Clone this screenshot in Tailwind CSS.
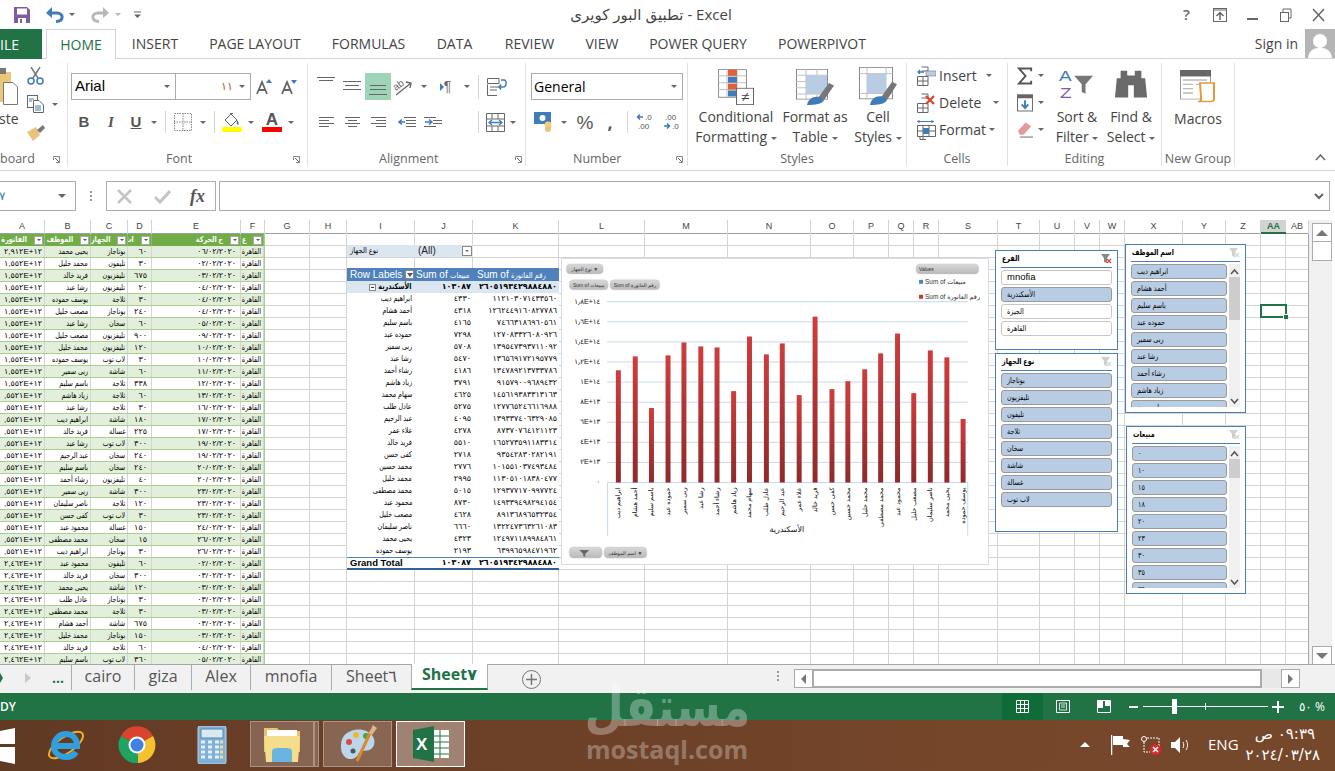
<!DOCTYPE html>
<html lang="ar">

<head>
    <meta charset="UTF-8">
    <title>Excel</title>
    <script src="https://cdn.jsdelivr.net/npm/@tailwindcss/browser@4"></script>
</head>

<body class="bg-white">
<div class="relative w-[1335px] h-[771px] overflow-hidden flex flex-col bg-white font-['Open_Sans','DejaVu_Sans',sans-serif] text-[#444]">

    <!-- Title bar -->
    <div class="h-[29px] shrink-0 flex items-center relative">
        <svg class="ml-[14px] w-[16px] h-[16px]" viewBox="0 0 16 16"><path d="M0 0H13L16 3V16H0Z" fill="#7e5ca3"/><rect x="3" y="1.5" width="10" height="6" fill="#fff"/><rect x="4" y="11" width="8" height="5" fill="#fff"/><rect x="6" y="12" width="2" height="4" fill="#7e5ca3"/></svg>
        <svg class="ml-[16px] w-[18px] h-[16px]" viewBox="0 0 18 16"><path d="M3 6H11C18 6 18 14 10 14.5" fill="none" stroke="#3f7cb9" stroke-width="3"/><path d="M0 6L6 0V11Z" fill="#3f7cb9"/></svg>
        <span class="ml-[5px] border-x-[3px] border-t-[3px] border-x-transparent border-t-[#666]"></span>
        <svg class="ml-[16px] w-[18px] h-[16px]" viewBox="0 0 18 16"><path d="M15 6H7C0 6 0 14 8 14.5" fill="none" stroke="#b8b8b8" stroke-width="3"/><path d="M18 6L12 0V11Z" fill="#b8b8b8"/></svg>
        <span class="ml-[6px] border-x-[3px] border-t-[3px] border-x-transparent border-t-[#b8b8b8]"></span>
        <svg class="ml-[13px] w-[7px] h-[7px]" viewBox="0 0 7 7"><path d="M0 1H7" stroke="#666"/><path d="M0 3.5H7L3.5 7Z" fill="#666"/></svg>
        <div class="ml-[425px] text-[15px] text-[#444] w-[170px] text-center whitespace-nowrap" dir="ltr">تطبيق البور كويرى - Excel</div>
        <div class="ml-auto flex items-center mr-[0px]">
            <span class="w-[33px] text-center text-[15px] font-semibold text-[#666]">?</span>
            <svg class="w-[33px] h-[14px]" viewBox="0 0 33 14"><rect x="10.5" y="0.5" width="13" height="13" fill="none" stroke="#666"/><path d="M11 2H23" stroke="#666"/><path d="M17 12V5M13.5 8L17 4.500L20.500 8" fill="none" stroke="#666" stroke-width="1.500"/></svg>
            <svg class="w-[33px] h-[14px]" viewBox="0 0 33 14"><path d="M11 11H22" stroke="#666" stroke-width="2"/></svg>
            <svg class="w-[33px] h-[14px]" viewBox="0 0 33 14"><rect x="11.500" y="4.500" width="8" height="9" fill="#fff" stroke="#666"/><path d="M14 4V1H22V10H20" fill="none" stroke="#666"/></svg>
            <svg class="w-[33px] h-[14px]" viewBox="0 0 33 14"><path d="M11 1L22 13M22 1L11 13" stroke="#666" stroke-width="1.500"/></svg>
        </div>
    </div>

    <!-- Ribbon tabs -->
    <div class="h-[30px] shrink-0 flex items-stretch border-b border-[#d4d4d4] text-[14px]">
        <div class="w-[42px] bg-[#217346] text-white flex items-center justify-end pr-[23px] -mb-px">ILE</div>
        <div class="ml-[4px] w-[70px] border-x border-t border-[#d4d4d4] bg-white -mb-px text-[#217346] flex items-center justify-center">HOME</div>
        <div class="flex items-center gap-[29px] ml-[15px] whitespace-nowrap">
            <span class="w-[48px] text-center">INSERT</span>
            <span class="w-[94px] text-center">PAGE LAYOUT</span>
            <span class="w-[75px] text-center">FORMULAS</span>
            <span class="w-[39px] text-center">DATA</span>
            <span class="w-[53px] text-center">REVIEW</span>
            <span class="w-[34px] text-center">VIEW</span>
            <span class="w-[100px] text-center">POWER QUERY</span>
            <span class="w-[90px] text-center">POWERPIVOT</span>
        </div>
        <div class="ml-auto flex items-center">
            <span>Sign in</span>
            <div class="ml-[7px] w-[30px] h-[29px] bg-[#b5b5b5] overflow-hidden flex justify-center">
                <svg class="w-[30px] h-[29px]" viewBox="0 0 30 29"><circle cx="15" cy="12" r="7" fill="#fff"/><path d="M3 29C4 20 10 19 15 19S26 20 27 29Z" fill="#fff"/></svg>
            </div>
        </div>
    </div>

    <!-- Ribbon -->
    <div class="h-[112px] shrink-0 flex items-start border-b border-[#d4d4d4] pt-[4px] text-[14px] relative">

        <!-- Clipboard -->
        <div class="w-[68px] h-[103px] shrink-0 border-r border-[#e1e1e1] flex flex-col">
            <div class="h-[89px] flex">
                <div class="w-[22px] shrink-0 pt-[5px] overflow-hidden">
                    <svg class="w-[22px] h-[38px]" viewBox="0 0 22 38"><rect x="-8" y="4" width="19" height="30" fill="#eac77b"/><rect x="-3" y="0" width="9" height="6" fill="#777"/><path d="M3.500 14.500H13L17.500 19V36.500H3.500Z" fill="#fff" stroke="#777"/></svg>
                    <div class="mt-[2px] -ml-[1px] text-[14px] whitespace-nowrap">ste</div>
                </div>
                <div class="ml-[5px] flex flex-col pt-[4px]">
                    <svg class="w-[17px] h-[18px]" viewBox="0 0 17 18"><path d="M4 0L11 11M13 0L6 11" stroke="#777" stroke-width="1.500"/><circle cx="4" cy="14" r="3" fill="none" stroke="#3f7cb9" stroke-width="1.500"/><circle cx="13" cy="14" r="3" fill="none" stroke="#3f7cb9" stroke-width="1.500"/></svg>
                    <div class="mt-[10px] flex items-center">
                        <svg class="w-[17px] h-[18px]" viewBox="0 0 17 18"><rect x="0.500" y="0.500" width="10" height="12" fill="#fff" stroke="#666"/><path d="M6.500 5.500H12L16.500 10V17.500H6.500Z" fill="#fff" stroke="#666"/><path d="M8 11H14M8 13H14M8 15H14M2 4H7M2 6H5" stroke="#3f7cb9"/></svg>
                        <span class="ml-[8px] border-x-[3px] border-t-[3px] border-x-transparent border-t-[#666]"></span>
                    </div>
                    <svg class="mt-[12px] w-[18px] h-[16px]" viewBox="0 0 18 16"><path d="M0 7L9 2L13 10L6 16Z" fill="#e9c27d"/><path d="M10 5L16 0L18 3L13 8Z" fill="#777"/></svg>
                </div>
            </div>
            <div class="flex items-center text-[12.500px] text-[#666] h-[14px]">
                <span class="whitespace-nowrap w-[53px]">board</span>
                <svg class="w-[7px] h-[7px]" viewBox="0 0 7 7"><path d="M0.500 4V0.500H6.500V6.500H3" fill="none" stroke="#888"/><path d="M2 2L6 6" stroke="#666"/></svg>
            </div>
        </div>

        <!-- Font -->
        <div class="w-[240px] h-[103px] shrink-0 border-r border-[#e1e1e1] flex flex-col">
            <div class="h-[89px] pt-[10px]">
                <div class="flex items-center h-[27px]">
                    <div class="ml-[3px] w-[180px] h-[27px] border border-[#ababab] flex items-center">
                        <div class="w-[104px] h-full border-r border-[#ababab] flex items-center justify-between pl-[3px] pr-[5px] text-[15px] text-black font-['Liberation_Sans']">Arial<span class="border-x-[3px] border-t-[3px] border-x-transparent border-t-[#666]"></span></div>
                        <div class="flex-1 h-full flex items-center justify-end pr-[5px] gap-[6px]"><span class="font-['Liberation_Sans'] text-[11px] text-[#b5581a]">١١</span><span class="border-x-[3px] border-t-[3px] border-x-transparent border-t-[#666]"></span></div>
                    </div>
                    <svg class="ml-[5px] w-[18px] h-[16px]" viewBox="0 0 18 16"><path d="M1 15L6 3L11 15M3 11H9" fill="none" stroke="#666" stroke-width="1.800"/><path d="M10 4L13 0L16 4Z" fill="#3f7cb9"/></svg>
                    <svg class="ml-[7px] w-[18px] h-[16px]" viewBox="0 0 18 16"><path d="M1 15L6 3L11 15M3 11H9" fill="none" stroke="#666" stroke-width="1.800"/><path d="M10 1L13 5L16 1Z" fill="#3f7cb9"/></svg>
                </div>
                <div class="flex items-center h-[24px] mt-[10px] font-['Liberation_Sans'] text-[#555]">
                    <span class="ml-[9px] w-[14px] text-center text-[15px] font-bold">B</span>
                    <span class="ml-[13px] w-[14px] text-center text-[15px] font-bold italic font-['Liberation_Serif']">I</span>
                    <span class="ml-[11px] w-[14px] text-center text-[15px] font-bold underline">U</span>
                    <span class="ml-[8px] border-x-[3px] border-t-[3px] border-x-transparent border-t-[#666]"></span>
                    <span class="ml-[8px] w-px h-[22px] bg-[#d4d4d4]"></span>
                    <svg class="ml-[8px] w-[18px] h-[18px]" viewBox="0 0 18 18"><path d="M0.500 0.500H17.500V17.500H0.500ZM9 0V18M0 9H18" fill="none" stroke="#888" stroke-dasharray="1.500 1"/></svg>
                    <span class="ml-[8px] border-x-[3px] border-t-[3px] border-x-transparent border-t-[#666]"></span>
                    <span class="ml-[8px] w-px h-[22px] bg-[#d4d4d4]"></span>
                    <div class="ml-[7px] w-[20px] flex flex-col items-center">
                        <svg class="w-[16px] h-[14px]" viewBox="0 0 16 14"><path d="M1 7L7 1L13 7L7 13Z" fill="#fff" stroke="#666"/><path d="M6 0.500H9" stroke="#666"/><path d="M13 7C15 9 15 12 14 12S12 9 13 7Z" fill="#3f7cb9"/></svg>
                        <span class="w-[20px] h-[5px] bg-[#ffff00]"></span>
                    </div>
                    <span class="ml-[6px] border-x-[3px] border-t-[3px] border-x-transparent border-t-[#666]"></span>
                    <div class="ml-[8px] w-[20px] flex flex-col items-center leading-none">
                        <span class="text-[17px] h-[14px] leading-[14px] font-bold text-[#555]">A</span>
                        <span class="w-[20px] h-[5px] bg-[#ff0000]"></span>
                    </div>
                    <span class="ml-[6px] border-x-[3px] border-t-[3px] border-x-transparent border-t-[#666]"></span>
                </div>
            </div>
            <div class="flex items-center text-[12.500px] text-[#666] h-[14px]">
                <span class="ml-[98px] w-[127px] text-left">Font</span>
                <svg class="w-[7px] h-[7px]" viewBox="0 0 7 7"><path d="M0.500 4V0.500H6.500V6.500H3" fill="none" stroke="#888"/><path d="M2 2L6 6" stroke="#666"/></svg>
            </div>
        </div>

        <!-- Alignment -->
        <div class="w-[218px] h-[103px] shrink-0 border-r border-[#e1e1e1] flex flex-col">
            <div class="h-[89px] pt-[10px]">
                <div class="flex items-stretch h-[27px]">
                    <div class="ml-[5px] w-[26px] flex items-center justify-center"><svg class="w-[18px] h-[27px]" viewBox="0 0 18 27"><path d="M0 4.500H18M2 7.500H16" stroke="#666"/></svg></div>
                    <div class="w-[26px] flex items-center justify-center"><svg class="w-[18px] h-[27px]" viewBox="0 0 18 27"><path d="M0 8.500H18M2 12.500H16M0 16.500H18" stroke="#666"/></svg></div>
                    <div class="w-[26px] bg-[#9fd5b7] flex items-center justify-center"><svg class="w-[18px] h-[27px]" viewBox="0 0 18 27"><path d="M1 12.500H17M1 16.500H17M0 21.500H18" stroke="#666"/></svg></div>
                    <div class="w-[24px] flex items-center justify-center"><svg class="w-[20px] h-[20px]" viewBox="0 0 20 20"><path d="M3 18L18 6M13 5L18 6L17 11" fill="none" stroke="#666" stroke-width="1.300"/><text x="0" y="11" transform="rotate(-35 6 8)" font-size="10" fill="#666" font-family="Liberation Sans">ab</text></svg></div>
                    <span class="w-[18px] flex items-center justify-center"><span class="border-x-[3px] border-t-[3px] border-x-transparent border-t-[#666]"></span></span>
                    <div class="w-[25px] flex items-center justify-center text-[#666] text-[14px] font-['Liberation_Sans']"><span class="border-y-[4px] border-l-[4px] border-y-transparent border-l-[#3f7cb9]"></span>¶</div>
                    <span class="w-[18px] flex items-center justify-center"><span class="border-x-[3px] border-t-[3px] border-x-transparent border-t-[#666]"></span></span>
                    <span class="ml-[2px] w-px h-[24px] self-center bg-[#d4d4d4]"></span>
                    <div class="w-[36px] flex items-center justify-center"><svg class="w-[20px] h-[18px]" viewBox="0 0 20 18"><path d="M0.500 0.500H12V5.500H0.500ZM0.500 6.500V17.500H10M3 9H12M3 12H10" fill="none" stroke="#666"/><path d="M14 2H17C20 2 20 9 16 9H12M14 6.500L12 9L14 11.500" fill="none" stroke="#3f7cb9" stroke-width="1.500"/></svg></div>
                </div>
                <div class="flex items-center h-[24px] mt-[10px]">
                    <div class="ml-[5px] w-[26px] flex justify-center"><svg class="w-[15px] h-[11px]" viewBox="0 0 15 11"><path d="M0 .5H15M0 3.500H10M0 6.500H15M0 9.500H10" stroke="#666"/></svg></div>
                    <div class="w-[26px] flex justify-center"><svg class="w-[15px] h-[11px]" viewBox="0 0 15 11"><path d="M0 .5H15M3 3.500H12M0 6.500H15M3 9.500H12" stroke="#666"/></svg></div>
                    <div class="w-[26px] flex justify-center"><svg class="w-[15px] h-[11px]" viewBox="0 0 15 11"><path d="M0 .5H15M5 3.500H15M0 6.500H15M5 9.500H15" stroke="#666"/></svg></div>
                    <div class="ml-[3px] w-[26px] flex justify-center"><svg class="w-[18px] h-[11px]" viewBox="0 0 18 11"><path d="M6 .5H18M8 9.500H18M8 3.500H18M8 6.500H18" stroke="#666"/><path d="M1 5H7M4 2.500L1 5L4 7.500" fill="none" stroke="#3f7cb9" stroke-width="1.500"/></svg></div>
                    <div class="w-[26px] flex justify-center"><svg class="w-[18px] h-[11px]" viewBox="0 0 18 11"><path d="M0 .5H12M0 9.500H12M9 3.500H18M9 6.500H18" stroke="#666"/><path d="M1 5H8M5 2.500L8 5L5 7.500" fill="none" stroke="#3f7cb9" stroke-width="1.500"/></svg></div>
                    <span class="ml-[32px] w-px h-[22px] bg-[#d4d4d4]"></span>
                    <div class="ml-[7px] w-[19px]"><svg class="w-[19px] h-[19px]" viewBox="0 0 19 19"><path d="M.5.500H18.500V18.500H.5ZM0 6H19M0 13H19M6 0V6M12 0V6M6 13V19M12 13V19" fill="none" stroke="#666"/><path d="M3 9.500H16M6 7L3 9.500L6 12M13 7L16 9.500L13 12" fill="none" stroke="#3f7cb9" stroke-width="1.300"/></svg></div>
                    <span class="ml-[5px] border-x-[3px] border-t-[3px] border-x-transparent border-t-[#666]"></span>
                </div>
            </div>
            <div class="flex items-center text-[12.500px] text-[#666] h-[14px]">
                <span class="ml-[71px] w-[136px]">Alignment</span>
                <svg class="w-[7px] h-[7px]" viewBox="0 0 7 7"><path d="M0.500 4V0.500H6.500V6.500H3" fill="none" stroke="#888"/><path d="M2 2L6 6" stroke="#666"/></svg>
            </div>
        </div>

        <!-- Number -->
        <div class="w-[162px] h-[103px] shrink-0 border-r border-[#e1e1e1] flex flex-col">
            <div class="h-[89px] pt-[10px]">
                <div class="ml-[5px] w-[152px] h-[27px] border border-[#ababab] flex items-center justify-between pl-[2px] pr-[5px] text-black">General<span class="border-x-[3px] border-t-[3px] border-x-transparent border-t-[#666]"></span></div>
                <div class="flex items-center h-[24px] mt-[10px]">
                    <svg class="ml-[8px] w-[20px] h-[20px]" viewBox="0 0 20 20"><rect x="0" y="0" width="17" height="12" fill="#3f7cb9"/><circle cx="8.500" cy="6" r="3" fill="#fff"/><circle cx="14" cy="13" r="3.500" fill="#f1d27a"/><circle cx="14" cy="17" r="3" fill="#e9c27d"/></svg>
                    <span class="ml-[7px] border-x-[3px] border-t-[3px] border-x-transparent border-t-[#666]"></span>
                    <span class="ml-[8px] w-[20px] text-center text-[#555] text-[19px] leading-none font-['Liberation_Sans']">%</span>
                    <span class="ml-[8px] w-[14px] text-center text-[#555] text-[18px] font-bold leading-none">,</span>
                    <span class="ml-[10px] w-px h-[22px] bg-[#d4d4d4]"></span>
                    <svg class="ml-[8px] w-[18px] h-[18px]" viewBox="0 0 18 18"><path d="M2 4H7M4 1.500L1.500 4L4 6.500" fill="none" stroke="#3f7cb9" stroke-width="1.500"/><text x="9" y="7" font-size="8" font-family="Liberation Sans" fill="#555">.0</text><text x="2" y="16" font-size="8" font-family="Liberation Sans" fill="#555">.00</text></svg>
                    <svg class="ml-[9px] w-[18px] h-[18px]" viewBox="0 0 18 18"><text x="2" y="7" font-size="8" font-family="Liberation Sans" fill="#555">.00</text><path d="M1 13H6M4 10.500L6.500 13L4 15.500" fill="none" stroke="#3f7cb9" stroke-width="1.500"/><text x="9" y="16" font-size="8" font-family="Liberation Sans" fill="#555">.0</text></svg>
                </div>
            </div>
            <div class="flex items-center text-[12.500px] text-[#666] h-[14px]">
                <span class="ml-[47px] w-[103px]">Number</span>
                <svg class="w-[7px] h-[7px]" viewBox="0 0 7 7"><path d="M0.500 4V0.500H6.500V6.500H3" fill="none" stroke="#888"/><path d="M2 2L6 6" stroke="#666"/></svg>
            </div>
        </div>

        <!-- Styles -->
        <div class="w-[219px] h-[103px] shrink-0 border-r border-[#e1e1e1] flex flex-col">
            <div class="h-[89px] flex pt-[6px] leading-[20px] text-center whitespace-nowrap">
                <div class="ml-[6px] w-[84px] flex flex-col items-center">
                    <svg class="w-[36px] h-[36px]" viewBox="0 0 36 42" preserveAspectRatio="none"><path d="M.5 .5H28.500V33H.5Z" fill="#fff" stroke="#888"/><path d="M0 8H28M0 16H28M0 24H28M9 0V33M19 0V33" stroke="#bbb"/><rect x="10" y="1" width="9" height="7" fill="#e0603a"/><rect x="10" y="9" width="9" height="7" fill="#3f7cb9"/><rect x="10" y="17" width="9" height="7" fill="#e0603a"/><rect x="10" y="25" width="9" height="7" fill="#3f7cb9"/><rect x="18.500" y="22.500" width="17" height="19" fill="#fff" stroke="#666"/><text x="23" y="37" font-size="15" fill="#444" font-family="Liberation Sans">≠</text></svg>
                    <span class="mt-[2px]">Conditional</span>
                    <span>Formatting <span class="inline-block align-middle border-x-[3px] border-t-[3px] border-x-transparent border-t-[#666]"></span></span>
                </div>
                <div class="ml-[3px] w-[68px] flex flex-col items-center">
                    <svg class="w-[38px] h-[36px]" viewBox="0 0 38 46" preserveAspectRatio="none"><rect x=".5" y=".5" width="31" height="38" fill="#fff" stroke="#888"/><path d="M0 8H32M0 16H32M0 24H32M0 32H32M10 0V39M21 0V39" stroke="#bbb"/><rect x="10" y="8" width="21" height="24" fill="#b8cce4"/><path d="M22 37L33 18L38 21L28 40Z" fill="#777"/><path d="M11 46C12 38 18 34 24 36L28 40C26 45 19 46 11 46Z" fill="#3f7cb9"/></svg>
                    <span class="mt-[2px]">Format as</span>
                    <span>Table <span class="inline-block align-middle border-x-[3px] border-t-[3px] border-x-transparent border-t-[#666]"></span></span>
                </div>
                <div class="ml-[1px] w-[56px] flex flex-col items-center">
                    <svg class="w-[38px] h-[38px] -mt-[2px]" viewBox="0 0 38 46" preserveAspectRatio="none"><rect x=".5" y=".5" width="33" height="38" fill="#fff" stroke="#888"/><path d="M0 8H34M0 32H34M8 0V39M27 0V39" stroke="#bbb"/><rect x="8" y="8" width="19" height="24" fill="#b8cce4"/><path d="M22 37L33 18L38 21L28 40Z" fill="#777"/><path d="M11 46C12 38 18 34 24 36L28 40C26 45 19 46 11 46Z" fill="#3f7cb9"/></svg>
                    <span class="mt-[2px]">Cell</span>
                    <span>Styles <span class="inline-block align-middle border-x-[3px] border-t-[3px] border-x-transparent border-t-[#666]"></span></span>
                </div>
            </div>
            <div class="h-[14px] text-[12.500px] text-[#666] flex items-center justify-center">Styles</div>
        </div>

        <!-- Cells -->
        <div class="w-[101px] h-[103px] shrink-0 border-r border-[#e1e1e1] flex flex-col">
            <div class="h-[89px] pt-[2px] pl-[10px] flex flex-col gap-[6px]">
                <div class="flex items-center h-[21px]">
                    <svg class="w-[19px] h-[20px]" viewBox="0 0 19 20"><path d="M.5 10.500H11V19.500H.5ZM6 10V20M0 15H11M4.500 1H11V5H4.500" fill="none" stroke="#666"/><path d="M1 6H7M3 4L1 6L3 8" fill="none" stroke="#3f7cb9" stroke-width="1.300"/><rect x="9" y="5" width="10" height="5" fill="#b8cce4" stroke="#666" stroke-width=".5"/></svg>
                    <span class="ml-[3px] w-[47px]">Insert</span>
                    <span class="border-x-[3px] border-t-[3px] border-x-transparent border-t-[#666]"></span>
                </div>
                <div class="flex items-center h-[21px]">
                    <svg class="w-[19px] h-[20px]" viewBox="0 0 19 20"><path d="M.5 10.500H11V19.500H.5ZM6 10V20M0 15H11M4.500 1H11V5H4.500" fill="none" stroke="#666"/><path d="M9 3L17 11M17 3L9 11" stroke="#d9432f" stroke-width="2.200"/></svg>
                    <span class="ml-[3px] w-[54px]">Delete</span>
                    <span class="border-x-[3px] border-t-[3px] border-x-transparent border-t-[#666]"></span>
                </div>
                <div class="flex items-center h-[21px]">
                    <svg class="w-[19px] h-[20px]" viewBox="0 0 19 20"><path d="M.5 5.500H18.500V16.500H.5ZM6 5V20M12 5V17M0 11H18M3 16.500V19.500H9" fill="none" stroke="#666"/><rect x="6" y="8" width="6" height="6" fill="#3f7cb9"/><path d="M0 1.500H17M2 0V3M15 0V3" stroke="#3f7cb9"/></svg>
                    <span class="ml-[3px] w-[50px]">Format</span>
                    <span class="border-x-[3px] border-t-[3px] border-x-transparent border-t-[#666]"></span>
                </div>
            </div>
            <div class="h-[14px] text-[12.500px] text-[#666] flex items-center justify-center">Cells</div>
        </div>

        <!-- Editing -->
        <div class="w-[154px] h-[103px] shrink-0 border-r border-[#e1e1e1] flex flex-col">
            <div class="h-[89px] flex">
                <div class="ml-[9px] w-[27px] flex flex-col pt-[2px] gap-[6px]">
                    <div class="flex items-center h-[21px]"><svg class="w-[18px] h-[18px]" viewBox="0 0 18 18"><path d="M15 4V1H2L9 9L2 17H15V14" fill="none" stroke="#555" stroke-width="2"/></svg><span class="ml-[4px] border-x-[3px] border-t-[3px] border-x-transparent border-t-[#666]"></span></div>
                    <div class="flex items-center h-[21px]"><svg class="w-[17px] h-[18px]" viewBox="0 0 17 18"><rect x=".5" y=".5" width="16" height="17" fill="#fff" stroke="#666"/><rect x="0" y="0" width="17" height="4" fill="#666"/><path d="M8.500 6V14M5 10.500L8.500 14.500L12 10.500" fill="none" stroke="#3f7cb9" stroke-width="2"/></svg><span class="ml-[5px] border-x-[3px] border-t-[3px] border-x-transparent border-t-[#666]"></span></div>
                    <div class="flex items-center h-[21px]"><svg class="w-[17px] h-[18px]" viewBox="0 0 17 18"><path d="M1 10L9 1L15 5L7 14H3Z" fill="#e39a9a"/><path d="M3 16.500H17" stroke="#666"/></svg><span class="ml-[5px] border-x-[3px] border-t-[3px] border-x-transparent border-t-[#666]"></span></div>
                </div>
                <div class="ml-[7px] w-[52px] flex flex-col items-center pt-[5px] leading-[20px] whitespace-nowrap">
                    <svg class="w-[36px] h-[35px]" viewBox="0 0 38 45" preserveAspectRatio="none"><text x="0" y="17" font-size="20" fill="#3f7cb9" font-family="Liberation Sans">A</text><text x="1" y="38" font-size="20" fill="#7e5ca3" font-family="Liberation Sans">Z</text><path d="M16 10H36L28 21V33L24 31V21Z" fill="#777"/></svg>
                    <span class="mt-[4px]">Sort &amp;</span>
                    <span>Filter <span class="inline-block align-middle border-x-[3px] border-t-[3px] border-x-transparent border-t-[#666]"></span></span>
                </div>
                <div class="ml-[2px] w-[52px] flex flex-col items-center pt-[7px] leading-[20px] whitespace-nowrap">
                    <svg class="w-[34px] h-[31px]" viewBox="0 0 36 45" preserveAspectRatio="none"><path d="M7 1H14V8H22V1H29V12H33L35 40H21V22H15V40H1L3 12H7Z" fill="#696969"/></svg>
                    <span class="mt-[6px]">Find &amp;</span>
                    <span>Select <span class="inline-block align-middle border-x-[3px] border-t-[3px] border-x-transparent border-t-[#666]"></span></span>
                </div>
            </div>
            <div class="h-[14px] text-[12.500px] text-[#666] flex items-center justify-center">Editing</div>
        </div>

        <!-- New Group -->
        <div class="w-[73px] h-[103px] shrink-0 border-r border-[#e1e1e1] flex flex-col">
            <div class="h-[89px] flex flex-col items-center pt-[7px] whitespace-nowrap">
                <svg class="w-[36px] h-[33px]" viewBox="0 0 36 46" preserveAspectRatio="none"><rect x=".5" y=".5" width="30" height="40" fill="#fff" stroke="#999"/><rect x="0" y="0" width="31" height="9" fill="#666"/><path d="M3 14H27M3 20H13M16 20H24M3 26H13M3 32H13" stroke="#bbb" stroke-width="2"/><path d="M20 18H34V41C34 44 30 44 28 44H18C22 44 21 41 21 38Z" fill="#fff" stroke="#e39a3c" stroke-width="2"/></svg>
                <span class="mt-[5px]">Macros</span>
            </div>
            <div class="h-[14px] text-[12.500px] text-[#666] flex items-center justify-center whitespace-nowrap">New Group</div>
        </div>

        <svg class="absolute left-[1315px] top-[95px] w-[11px] h-[7px]" viewBox="0 0 11 7"><path d="M1 6L5.500 1L10 6" fill="none" stroke="#666" stroke-width="1.500"/></svg>
    </div>

    <!-- Formula bar -->
    <div class="h-[49px] shrink-0 pt-[10px] pb-[9px] flex items-stretch text-[#777]">
        <div class="w-[76px] border-y border-r border-[#ababab] flex items-center justify-between pr-[9px]">
            <span class="text-[12px] text-[#3f7cb9] font-['Liberation_Sans'] -ml-[1px]">٧</span>
            <span class="border-x-[4px] border-t-[4px] border-x-transparent border-t-[#666]"></span>
        </div>
        <div class="w-[30px] flex items-center justify-center"><span class="w-[2px] h-[10px] border-l-2 border-dotted border-[#999]"></span></div>
        <div class="w-[110px] border border-[#ababab] flex items-center pl-[10px]">
            <svg class="w-[15px] h-[15px]" viewBox="0 0 15 15"><path d="M1 1L14 14M14 1L1 14" stroke="#c4c4c4" stroke-width="2.500"/></svg>
            <svg class="ml-[22px] w-[17px] h-[15px]" viewBox="0 0 17 15"><path d="M1 8L6 13L16 2" fill="none" stroke="#c4c4c4" stroke-width="3"/></svg>
            <span class="ml-[19px] font-['Liberation_Serif'] italic font-bold text-[18px] text-[#555] leading-none">fx</span>
        </div>
        <div class="ml-[3px] w-[1111px] border border-[#ababab] flex items-center justify-end pr-[5px]">
            <svg class="w-[10px] h-[7px]" viewBox="0 0 10 7"><path d="M1 1L5 5L9 1" fill="none" stroke="#666" stroke-width="2"/></svg>
        </div>
    </div>

    <!-- Sheet -->
    <div class="h-[444px] shrink-0 flex font-['Liberation_Sans','DejaVu_Sans',sans-serif] text-black">
        <div class="w-[1309px] shrink-0 flex flex-col border-r border-[#a6a6a6] -mr-px relative z-10">
            <div id="col-heads" class="h-[14px] shrink-0 grid grid-cols-[45px_46px_37px_24px_89px_24px_45px_37px_68px_58px_86px_86px_83px_83px_43px_35px_25px_25px_59px_42px_35px_25px_25px_58px_43px_35px_25px_23px] border-b border-[#9f9f9f] text-[9px] text-[#444] text-center leading-[13px]"></div>
            <div class="relative flex-1 overflow-hidden">
                <!-- grid lines -->
                <div id="grid-lines" class="absolute inset-0 grid grid-cols-[45px_46px_37px_24px_89px_24px_45px_37px_68px_58px_86px_86px_83px_83px_43px_35px_25px_25px_59px_42px_35px_25px_25px_58px_43px_35px_25px_23px] bg-[repeating-linear-gradient(to_bottom,transparent_0,transparent_11px,#d4d4d4_11px,#d4d4d4_12px)]"></div>

                <div class="relative flex items-start">
                    <!-- data table -->
                    <div id="data-table" class="w-[265px] shrink-0 text-[8px] border-r border-[#a9d08e]"></div>

                    <!-- pivot table -->
                    <div class="ml-[82px] w-[212px] shrink-0 pt-[11px] text-[8px]">
                        <div class="h-[12px] w-[126px] bg-[#dce6f1] flex items-center">
                            <span class="w-[71px] pl-[3px] text-[8px]"><span class="inline-block origin-left scale-x-[.85]">نوع الجهاز</span></span>
                            <span class="text-[10px] leading-none text-[#222]">(All)</span>
                            <span class="ml-auto mr-[1px] w-[10px] h-[10px] bg-white border border-[#888] flex items-center justify-center"><span class="border-x-[2px] border-t-[2px] border-x-transparent border-t-[#666]"></span></span>
                        </div>
                        <div class="mt-[11px] h-[13px] bg-[#4f81bd] text-white text-[10px] grid grid-cols-[68px_58px_86px] items-center whitespace-nowrap leading-none">
                            <span class="pl-[3px] flex items-center justify-between pr-[1px]">Row Labels<span class="w-[9px] h-[9px] bg-white border border-[#888] flex items-center justify-center"><span class="border-x-[3px] border-t-[4px] border-x-transparent border-t-[#555]"></span></span></span>
                            <span class="pl-[1px] overflow-hidden">Sum of <span class="inline-block text-[8px] origin-left scale-x-[.85]">مبيعات</span></span>
                            <span class="pl-[4px] overflow-hidden">Sum of <span class="inline-block text-[8px] origin-left scale-x-[.85]">رقم الفاتورة</span></span>
                        </div>
                        <div id="pivot-rows"></div>
                        <div class="h-[13px] bg-white border-t border-[#4f81bd] border-b-2 border-b-[#366092] grid grid-cols-[68px_58px_86px] items-center font-bold leading-none">
                            <span class="pl-[3px] text-[9.500px] whitespace-nowrap">Grand Total</span>
                            <span class="text-right pr-[2px]">١٠٣٠٨٧</span>
                            <span class="text-right pr-[2px]">٢٦٠٥١٩٣٤٢٩٨٨٤٨٨٠</span>
                        </div>
                    </div>
                </div>

                <!-- chart, floats over the sheet -->
                <div class="absolute left-[561px] top-[24px] w-[428px] h-[307px] bg-white border border-[#d6dce5]">
                    <svg id="chart" class="w-full h-full" viewBox="561 258 428 307" font-family="Liberation Sans, DejaVu Sans, sans-serif"></svg>
                </div>

                <!-- slicers -->
                <div id="slicers"></div>

                <!-- selected cell -->
                <div class="absolute left-[1260px] top-[70px] w-[27px] h-[14px] border-2 border-[#217346]">
                    <span class="absolute -right-[3px] -bottom-[3px] w-[5px] h-[5px] bg-[#217346] border-l border-t border-white"></span>
                </div>
            </div>
        </div>
        <!-- vertical scrollbar -->
        <div class="w-[23px] ml-px h-full bg-[#f0f0f0] flex flex-col items-center pt-[3px] pl-[3px]">
            <div class="w-[20px] h-[19px] bg-white border border-[#ababab] flex items-center justify-center"><span class="border-x-[6px] border-b-[6px] border-x-transparent border-b-[#777]"></span></div>
            <div class="w-[20px] h-[20px] bg-white border border-[#ababab] -mt-px"></div>
            <div class="mt-auto -mb-[1px] w-[20px] h-[19px] bg-white border border-[#ababab] flex items-center justify-center"><span class="border-x-[6px] border-t-[6px] border-x-transparent border-t-[#777]"></span></div>
        </div>
    </div>

    <!-- Sheet tabs -->
    <div class="h-[29px] shrink-0 bg-[#f1f1f1] border-t border-[#a6a6a6] flex items-start text-[16px] text-[#555] relative">
        <div class="w-[72px] h-[25px] flex items-center border-r border-[#ababab] shrink-0">
            <span class="border-y-[5px] border-r-0 border-l-[3px] border-y-transparent border-l-[#217346]"></span>
            <span class="ml-[22px] border-y-[5px] border-l-[6px] border-y-transparent border-l-[#c8c8c8]"></span>
            <span class="ml-[21px] text-[#217346] text-[14px] font-bold leading-none">...</span>
        </div>
        <div class="w-[63px] h-[25px] pb-[4px] flex items-center justify-center border-r border-[#ababab]">cairo</div>
        <div class="w-[57px] h-[25px] pb-[4px] flex items-center justify-center border-r border-[#ababab]">giza</div>
        <div class="w-[59px] h-[25px] pb-[4px] flex items-center justify-center border-r border-[#ababab]">Alex</div>
        <div class="w-[81px] h-[25px] pb-[4px] flex items-center justify-center border-r border-[#ababab]">mnofia</div>
        <div class="w-[79px] h-[25px] pb-[4px] flex items-center justify-center">Sheet٦</div>
        <div class="w-[77px] h-[26px] pb-[4px] bg-white border-x border-[#ababab] border-b-2 border-b-[#217346] -mt-px font-bold text-[#217346] flex items-center justify-center">Sheet٧</div>
        <svg class="ml-[34px] mt-[5px] w-[19px] h-[19px]" viewBox="0 0 19 19"><circle cx="9.500" cy="9.500" r="9" fill="none" stroke="#777"/><path d="M9.500 4V15M4 9.500H15" stroke="#777" stroke-width="1.500"/></svg>
        <span class="ml-[236px] mt-[6px] w-[2px] h-[10px] border-l-2 border-dotted border-[#999]"></span>
        <div class="ml-[15px] mt-[4px] w-[506px] h-[19px] flex items-stretch">
            <div class="w-[19px] bg-white border border-[#ababab] flex items-center justify-center"><span class="border-y-[5px] border-r-[5px] border-y-transparent border-r-[#777]"></span></div>
            <div class="w-[450px] bg-white border-2 border-[#ababab] -ml-px"></div>
            <div class="flex-1 bg-[#e8e8e8]"></div>
            <div class="w-[19px] bg-white border border-[#ababab] flex items-center justify-center"><span class="border-y-[5px] border-l-[5px] border-y-transparent border-l-[#777]"></span></div>
        </div>
    </div>

    <!-- Status bar -->
    <div class="h-[27px] shrink-0 bg-[#217346] text-white flex items-stretch text-[12px] font-semibold">
        <span class="self-center">DY</span>
        <div class="ml-[986px] w-[41px] bg-[#0f6b37] flex items-center justify-center">
            <svg class="w-[13px] h-[13px]" viewBox="0 0 13 13"><path d="M.5.5H12.500V12.500H.5ZM4.500 0V13M8.500 0V13M0 4.500H13M0 8.500H13" fill="none" stroke="#fff"/></svg>
        </div>
        <div class="w-[41px] flex items-center justify-center">
            <svg class="w-[14px] h-[13px]" viewBox="0 0 14 13"><path d="M.5.5H13.500V12.500H.5Z" fill="none" stroke="#fff"/><path d="M3.500 3H10.500V10H3.500ZM5 5H9M5 7H9" fill="none" stroke="#fff" stroke-width=".8"/></svg>
        </div>
        <div class="w-[41px] flex items-center justify-center">
            <svg class="w-[14px] h-[13px]" viewBox="0 0 14 13"><path d="M.5.5H13.500V12.500H.5Z" fill="none" stroke="#fff"/><rect x="0" y="0" width="6" height="8" fill="#fff"/><rect x="8" y="0" width="5" height="6" fill="#fff"/></svg>
        </div>
        <span class="ml-[4px] self-center w-[9px] h-[2px] bg-white"></span>
        <div class="ml-[5px] w-[125px] self-center h-[11px] relative flex items-center">
            <span class="w-full h-px bg-white"></span>
            <span class="absolute left-[29px] -top-[2px] w-[5px] h-[15px] bg-white"></span>
            <span class="absolute left-[62px] top-[2px] w-px h-[7px] bg-white"></span>
        </div>
        <svg class="ml-[4px] self-center w-[12px] h-[12px]" viewBox="0 0 12 12"><path d="M6 0V12M0 6H12" stroke="#fff" stroke-width="2"/></svg>
        <span class="ml-[15px] self-center text-[12px] font-normal whitespace-nowrap" dir="ltr">٥٠ %</span>
    </div>

    <!-- Taskbar -->
    <div class="flex-1 bg-[linear-gradient(90deg,#613a24,#6c4027_30%,#6e4229_50%,#764629_75%,#75482c)] flex items-start relative text-white">
        <div class="w-[47px] h-full shrink-0 pt-[8px]">
            <svg class="w-[15px] h-[36px]" viewBox="0 0 15 36"><path d="M0 3L15 0V16H0ZM0 19H15V36L0 33Z" fill="#fff"/></svg>
        </div>
        <svg class="w-[38px] h-[38px] mt-[6px] shrink-0" viewBox="0 0 38 38"><ellipse cx="19" cy="19" rx="20" ry="8" transform="rotate(-35 19 19)" fill="none" stroke="#edb021" stroke-width="2"/><path d="M6 20H30C30 12 25 8 19 8S7 13 7 20S12 31 19 31C24 31 27 29 29 26" fill="none" stroke="#2f9fde" stroke-width="6"/></svg>
        <svg class="ml-[33px] w-[38px] h-[38px] mt-[6px] shrink-0" viewBox="0 0 38 38"><path d="M19 19L3 10A18 18 0 0 1 35 10Z" fill="#d9442f"/><path d="M19 19L35 10A18 18 0 0 1 20 37Z" fill="#f5c12e"/><path d="M19 19L20 37A18 18 0 0 1 3 10Z" fill="#1ea362"/><circle cx="19" cy="19" r="8.500" fill="#fff"/><circle cx="19" cy="19" r="6.500" fill="#3f83e0"/></svg>
        <svg class="ml-[41px] w-[30px] h-[38px] mt-[6px] shrink-0" viewBox="0 0 30 38"><rect x="1" y="0" width="28" height="38" rx="2" fill="#7fb1d8" stroke="#b7d0e6"/><rect x="4" y="3" width="22" height="9" fill="#d9e8f2" stroke="#5d86a6"/><path d="M4 16H8M11 16H15M18 16H22M4 21H8M11 21H15M18 21H22M4 26H8M11 26H15M18 26H22M4 31H8M11 31H15M18 31H22" stroke="#e6edf3" stroke-width="3"/><path d="M23 16H26M23 21H26M23 26H26M23 31H26" stroke="#f0d9a0" stroke-width="3"/></svg>
        <div class="ml-[23px] mt-px w-[64px] h-[46px] bg-[#ffffff]/20 border border-[#ffffff]/30 flex items-center justify-center shrink-0">
            <svg class="w-[38px] h-[40px]" viewBox="0 0 38 40"><path d="M1 4H14L17 7H37V28H1Z" fill="#e7c566"/><rect x="4" y="6" width="30" height="8" fill="#fff"/><path d="M1 12H37L35 38H3Z" fill="#f5dd8e"/><path d="M9 38V28C9 24 12 24 19 24S29 24 29 28V38Z" fill="#68b6e0"/></svg>
        </div>
        <div class="mt-px w-[5px] h-[46px] bg-[#ffffff]/20 border border-[#ffffff]/30 shrink-0"></div>
        <div class="ml-[4px] mt-px w-[69px] h-[46px] bg-[#ffffff]/20 border border-[#ffffff]/30 flex items-center justify-center shrink-0">
            <svg class="w-[38px] h-[38px]" viewBox="0 0 38 38"><path d="M2 20C2 8 14 3 24 5C34 7 38 16 34 22C30 28 22 24 20 28C18 34 10 36 6 32C2 28 2 24 2 20Z" fill="#bcd6ec"/><circle cx="10" cy="17" r="3" fill="#e0483a"/><circle cx="17" cy="10" r="3" fill="#f1b82c"/><circle cx="27" cy="11" r="3" fill="#4da24a"/><circle cx="14" cy="26" r="2.500" fill="#555"/><path d="M18 36L32 6" stroke="#d98a2c" stroke-width="3"/><path d="M30 8L34 0L38 3L33 10Z" fill="#d9b78a"/></svg>
        </div>
        <div class="ml-[4px] mt-px w-[69px] h-[46px] bg-[#ffffff]/35 border border-white flex items-center justify-center shrink-0">
            <svg class="w-[36px] h-[36px]" viewBox="0 0 36 36"><rect x="14" y="4" width="22" height="28" fill="#fff"/><path d="M20 4V32M27 4V32M14 10H36M14 16H36M14 22H36M14 28H36" stroke="#217346" stroke-width="1"/><path d="M0 4L21 0V36L0 32Z" fill="#217346"/><text x="3" y="24" font-size="17" font-weight="bold" fill="#fff" font-family="Liberation Sans">X</text></svg>
        </div>
        <!-- tray -->
        <div class="ml-[615px] h-full flex items-center shrink-0 pb-[2px]">
            <span class="border-x-[5px] border-b-[5px] border-x-transparent border-b-white"></span>
            <svg class="ml-[21px] w-[19px] h-[20px]" viewBox="0 0 19 20"><path d="M.5 0V20" stroke="#fff" stroke-width="1.500"/><path d="M2 1H12V4L19 5L16 9L19 12H12V10H2Z" fill="#fff"/></svg>
            <svg class="ml-[11px] w-[20px] h-[20px]" viewBox="0 0 20 20"><circle cx="3" cy="4" r="2.500" fill="none" stroke="#fff"/><path d="M6 3H18V12M3 7V17H9" fill="none" stroke="#fff" stroke-dasharray="2 1"/><circle cx="14.500" cy="14.500" r="5.500" fill="#d9292c"/><path d="M12 12L17 17M17 12L12 17" stroke="#fff" stroke-width="1.500"/></svg>
            <svg class="ml-[10px] w-[20px] h-[18px]" viewBox="0 0 20 18"><path d="M0 6H4L9 1V17L4 12H0Z" fill="#fff"/><path d="M12 6C13 8 13 10 12 12M15 4C17 7 17 11 15 14" fill="none" stroke="#fff"/></svg>
            <span class="ml-[17px] text-[15px] w-[30px] text-center font-['Open_Sans']">ENG</span>
            <div class="ml-[14px] flex flex-col items-end w-[68px] leading-[21px] whitespace-nowrap font-['DejaVu_Sans']" dir="ltr">
                <span class="pr-[5px] text-[15px] tracking-[1px]">٠٩:٣٩ ص</span>
                <span class="text-[15px]">٢٠٢٤/٠٣/٢٨</span>
            </div>
        </div>
    </div>

    <!-- watermark -->
    <div class="absolute left-[587px] top-[676px] w-[160px] text-center text-white/30 z-20 pointer-events-none flex flex-col items-center">
        <div class="text-[56px] leading-[62px] font-bold font-['DejaVu_Sans'] whitespace-nowrap scale-x-[.81]">مستقل</div>
        <div class="text-[25px] leading-[26px] font-bold font-['Open_Sans'] whitespace-nowrap -mt-[2px]">mostaql.com</div>
    </div>
</div>

<script>
    // column letters
    const cols = ["A","B","C","D","E","F","G","H","I","J","K","L","M","N","O","P","Q","R","S","T","U","V","W","X","Y","Z","AA","AB"];
    document.getElementById("col-heads").innerHTML = cols.map(c => c === "AA"
        ? `<div class="bg-[#d2d2d2] text-[#217346] font-bold border-b-2 border-[#217346] h-[14px]">${c}</div>`
        : `<div class="border-r border-[#d4d4d4]">${c}</div>`).join("");
    document.getElementById("grid-lines").innerHTML = cols.map(() => `<div class="border-r border-[#d4d4d4]"></div>`).join("");

    // the only Arabic font here is wider than the one in Excel
    const ar = t => `<span class="inline-block origin-right scale-x-[.8]">${t}</span>`;
    const arL = t => `<span class="inline-block origin-left scale-x-[.8]">${t}</span>`;

    // data table
    const b = "١,٥٥٢E+١٢", c = ",٥٥٢١E+١٢", d = "٢,٤٦٢E+١٢";
    const rows = [
        ["٢,٩١٢E+١٢","يحيى محمد","بوتاجاز","٦٠","٠٦"],[b,"محمد خليل","تليفون","٣٠","٠٢"],[b,"فريد خالد","تليفزيون","٦٧٥","٠٣"],
        [b,"رشا عبد","تليفزيون","٢٠","٠٤"],[b,"يوسف حموده","ثلاجة","٣٠","٠٤"],[b,"مصعب خليل","بوتاجاز","٢٤٠","٠٤"],
        [b,"رشا عبد","سخان","٦٠","٠٥"],[b,"مصعب خليل","تليفزيون","٩٠٠","٠٩"],[b,"محمد خليل","تليفزيون","١٢٠","١٠"],
        [b,"يوسف حموده","لاب توب","٣٠","١٠"],[b,"ربى سمير","شاشة","٦٠","١١"],[b,"باسم سليم","ثلاجة","٣٣٨","١٢"],
        [c,"زياد هاشم","ثلاجة","٦٠","١٣"],[c,"رشا عبد","ثلاجة","٣٠","١٦"],[c,"ابراهيم ديب","شاشة","١٨٠","١٧"],
        [c,"فريد خالد","غسالة","٢٢٥","١٧"],[c,"رشا عبد","لاب توب","٣٠٠","١٩"],[c,"عبد الرحيم","سخان","٢٤٠","١٩"],
        [c,"باسم سليم","سخان","٢٤٠","٢٠"],[c,"رشاء أحمد","تليفزيون","٤٠","٢٠"],[c,"ربى سمير","شاشة","٣٠٠","٢٣"],
        [c,"ناصر سليمان","ثلاجة","١٢٠","٢٣"],[c,"كفى حسن","لاب توب","٣٠","٢٣"],[c,"محمود عبد","غسالة","١٥٠","٢٤"],
        [c,"محمد مصطفى","سخان","١٥","٢٦"],[c,"ابراهيم ديب","بوتاجاز","٣٠","٢٦"],[d,"محمود عبد","تليفون","٦٠","٠٢"],
        [d,"فريد خالد","سخان","٣٠٠","٠٣"],[d,"يحيى محمد","شاشة","١٢٠","٠٣"],[d,"عادل طلب","بوتاجاز","٣٠","٠٣"],
        [d,"محمد مصطفى","ثلاجة","٣٠","٠٣"],[d,"أحمد هشام","شاشة","٦٧٥","٠٣"],[d,"محمد خليل","بوتاجاز","١٥٠","٠٣"],
        [d,"فريد خالد","ثلاجة","٦٠","٠٤"],[d,"باسم سليم","لاب توب","٣٦٠","٠٥"],
    ];
    const rowGrid = "grid grid-cols-[45px_46px_37px_24px_89px_23px]";
    const headBtn = `<span class="shrink-0 ml-[2px] w-[9px] h-[9px] bg-white border border-[#aaa] flex items-center justify-center"><span class="border-x-[2px] border-t-[2px] border-x-transparent border-t-[#555]"></span></span>`;
    const heads = ["الفاتورة","الموظف","الجهاز","ات","خ الحركة","ع"];
    let html = `<div class="${rowGrid} h-[12px] bg-[#70ad47] text-white font-bold">` +
        heads.map(h => `<div class="flex items-center justify-end overflow-hidden whitespace-nowrap pr-px border-r border-[#a9d08e]/50"><span class="pr-[5px]">${ar(h)}</span>${headBtn}</div>`).join("") + `</div>`;
    rows.forEach((r, i) => {
        const bg = i % 2 === 0 ? "bg-[#e2efda]" : "bg-white";
        const cell = "flex items-center justify-end overflow-hidden whitespace-nowrap pr-[2px] border-r border-[#d4d4d4]";
        html += `<div class="${rowGrid} h-[12px] ${bg} border-b border-[#a9d08e]">
            <div class="${cell}" dir="ltr">${r[0]}</div><div class="${cell}">${ar(r[1])}</div><div class="${cell}">${ar(r[2])}</div>
            <div class="${cell} pr-[4px]">${r[3]}</div><div class="${cell} pr-[4px] tracking-[.4px]" dir="ltr">${r[4]}/٠٢/٢٠٢٠</div><div class="${cell}">${ar("القاهرة")}</div></div>`;
    });
    document.getElementById("data-table").innerHTML = html;

    // pivot rows
    const pivot = [
        ["ابراهيم ديب","٤٣٣٠","١١٢١٠٣٠٧١٤٣٣٥٦٠"],["أحمد هشام","٤٣١٨","١٢٦٢٤٤٩١٦٠٨٢٧٧٨٦"],["باسم سليم","٤١٦٥","٧٤٦٦٣١٨٦٩٦٠٥٦١"],
        ["حموده عبد","٧٢٩٨","١٢٧٠٨٣٣٢٦٠٨٠٩٢٦"],["ربى سمير","٥٧٠٨","١٣٩٥٤٧٣٩٣٧١١٠٩٢"],["رشا عبد","٥٤٧٠","١٣٦٥٦٩١٧٢١٩٥٧٧٩"],
        ["رشاء أحمد","٤١٨٦","١٣٤٧٨٩٢١٣٧٣٣٧٨٦"],["زياد هاشم","٣٧٩١","٩١٥٧٩٠٠٩٦٨٩٤٣٢"],["سهام محمد","٤٦٢٥","١٤٥٦١٩٣٨٣٣١٣١٦٣"],
        ["عادل طلب","٥٢٧٥","١٢٧٧٦٥٢٤٦٦١٦٩٨٨"],["عبد الرحيم","٤٠٩٥","١٣٩٣٣٧٤٠٦٣٢٩٠٨٥"],["علاء عمر","٤٢٧٨","٨٧٣٧٠٧٦٤١٢١١٢٣"],
        ["فريد خالد","٥٥١٠","١٦٥٢٧٣٥٩١١٨٣٣١٤"],["كفى حسن","٢٧١٨","٩٣٥٤٢٨٣٠٢٨٢١٩١"],["محمد حسين","٢٧٧٦","١٠١٥٥١٠٣٧٤٩٣٤٨٤"],
        ["محمد خليل","٢٩٩٥","١١٣٠٥١٠١٨٣٨٠٤٧٧"],["محمد مصطفى","٥٠١٥","١٢٩٣٧٧١٧٠٩٩٧٧٢٤"],["محمود عبد","٨٧٣٠","١٤٩٣٣٩٤٩٨٢٩٤١٥٤"],
        ["مصعب خليل","٤٦٢٨","٨٩١٣٦٨٩٦٥٣٢٣٥٤"],["ناصر سليمان","٦٦٦٠","١٣٢٢٤٧٣٦٣٢٦١٠٨٣"],["يحيى محمد","٤٣٢٣","١٢٤٩٧١١٨٩٩٨٤٨٦١"],
        ["يوسف حموده","٢١٩٣","٦٣٩٩٦٥٩٨٤٧١٩٦٢"],
    ];
    const pRow = "grid grid-cols-[68px_58px_86px] h-[12px] items-center leading-none whitespace-nowrap";
    document.getElementById("pivot-rows").innerHTML =
        `<div class="${pRow} bg-[#dce6f1] font-bold"><span class="flex items-center justify-end pr-[3px] gap-[2px]"><span class="w-[7px] h-[7px] -mr-[8px] border border-[#888] bg-white flex items-center justify-center"><span class="w-[3px] h-px bg-[#333]"></span></span>${ar("الأسكندرية")}</span><span class="text-right pr-[2px]">١٠٣٠٨٧</span><span class="text-right pr-[2px]">٢٦٠٥١٩٣٤٢٩٨٨٤٨٨٠</span></div>` +
        pivot.map(p => `<div class="${pRow} bg-white"><span class="text-right pr-[3px]">${ar(p[0])}</span><span class="text-right pr-[2px]">${p[1]}</span><span class="text-right pr-[2px]">${p[2]}</span></div>`).join("");

    // chart
    const names = pivot.map(p => p[0]);
    const centers = [172,223,272,322,370,421,470,520,568,619,667,718,766,817,865,916,964,1015,1064,1114,1164,1213];
    const tops = [345,303,459,300,261,273,276,408,243,297,264,420,183,402,378,342,294,234,414,285,306,492];
    const yLabels = ["١٫٨E+١٤","١٫٦E+١٤","١٫٤E+١٤","١٫٢E+١٤","١E+١٤","٨E+١٣","٦E+١٣","٤E+١٣","٢E+١٣","٠"];
    let svg = `<defs><linearGradient id="bar" x1="0" y1="0" x2="0" y2="1"><stop offset="0" stop-color="#cf3d3d"/><stop offset="1" stop-color="#8f2a2a"/></linearGradient>
        <linearGradient id="pill" x1="0" y1="0" x2="0" y2="1"><stop offset="0" stop-color="#d9d9d9"/><stop offset="1" stop-color="#b8b8b8"/></linearGradient></defs>`;
    yLabels.forEach((l, i) => {
        const y = 301 + i * 20.22;
        svg += `<path d="M606 ${y}H969" stroke="#c6d9ec" stroke-width="1"/><text x="599" y="${y + 2}" font-size="7" text-anchor="end" fill="#111">${l}</text>`;
    });
    svg += `<path d="M606.500 483V537M969 483V537" stroke="#c6d9ec"/>`;
    centers.forEach((cx, i) => {
        const x = 560 + cx / 3, y = 255 + tops[i] / 3;
        svg += `<rect x="${x - 2.500}" y="${y}" width="5" height="${483 - y}" fill="url(#bar)"/>`;
        svg += `<text transform="translate(${x + 2} 488) rotate(-90)" font-size="6.500" text-anchor="end" fill="#111">${names[i]}</text>`;
    });
    svg += `<text x="787" y="533" font-size="8" text-anchor="middle" fill="#111">الأسكندرية</text>`;
    const pill = (x, y, w, h, t, anchor) => `<rect x="${x}" y="${y}" width="${w}" height="${h}" rx="4" fill="url(#pill)" stroke="#c8c8c8" stroke-width=".5"/>` +
        (t ? `<text x="${x + w / 2}" y="${y + h - 3}" font-size="5" text-anchor="middle" fill="#333">${t}</text>` : "");
    svg += pill(565, 263, 37, 10, "نوع الجهاز ▼");
    svg += pill(568, 279, 39, 10, "Sum of مبيعات");
    svg += pill(609, 279, 50, 10, "Sum of رقم الفاتورة");
    svg += pill(917, 263, 63, 10, "") + `<text x="920" y="270" font-size="5" fill="#333">Values</text>`;
    svg += pill(568, 548, 33, 11, "") + `<path d="M578 551H588L584 555V558L582 557V555Z" fill="#666"/>`;
    svg += pill(603, 548, 43, 11, "اسم الموظف ▼");
    svg += `<rect x="920" y="279" width="4" height="4" fill="#4f81bd"/><text x="926" y="283" font-size="6.500" fill="#333">Sum of مبيعات</text>`;
    svg += `<rect x="920" y="294" width="4" height="4" fill="#c0392f"/><text x="926" y="298" font-size="6.500" fill="#333">Sum of رقم الفاتورة</text>`;
    document.getElementById("chart").innerHTML = svg;

    // slicers
    const filterIcon = on => `<svg class="w-[11px] h-[10px] ml-auto" viewBox="0 0 11 10"><path d="M0 0H9L6 4V9L3 8V4Z" fill="${on ? "#888" : "#d0d0d0"}"/><path d="M6 5L10 9M10 5L6 9" stroke="${on ? "#d9432f" : "#d8d8d8"}" stroke-width="1.200"/></svg>`;
    const scroll = (thumbH) => `<div class="w-[11px] ml-[2px] h-full bg-[#f0f0f0] flex flex-col items-center shrink-0">
        <svg class="w-[9px] h-[10px] mt-[3px] shrink-0" viewBox="0 0 9 10"><path d="M1 7L4.500 3L8 7" fill="none" stroke="#555" stroke-width="1.500"/></svg>
        <div class="w-full ${thumbH} bg-[#cdcdcd]"></div>
        <svg class="w-[9px] h-[10px] mt-auto mb-[1px] shrink-0" viewBox="0 0 9 10"><path d="M1 3L4.500 7L8 3" fill="none" stroke="#555" stroke-width="1.500"/></svg></div>`;
    const item = (t, on) => `<div class="h-[15px] mb-[2px] shrink-0 rounded-[3px] border pl-[5px] flex items-center whitespace-nowrap ${on ? "bg-[#b8cce4] border-[#9a9a9a]" : "bg-white border-[#c6c6c6]"}">${t === "mnofia" ? `<span class="text-[9.500px] font-normal">${t}</span>` : arL(t)}</div>`;
    const slicer = (box, title, items, scrollbar, on) => `<div class="absolute ${box} bg-white border border-[#4a7ebb] text-[8px] overflow-hidden">
        <div class="h-[17px] mx-[5px] border-b border-[#4a7ebb] flex items-center font-bold pl-[1px]">${arL(title)}${filterIcon(on)}</div>
        <div class="mx-[5px] mt-[2px] h-[calc(100%-24px)] flex overflow-hidden"><div class="flex-1 flex flex-col">${items}</div>${scrollbar}</div></div>`;
    const emp = ["ابراهيم ديب","أحمد هشام","باسم سليم","حموده عبد","ربى سمير","رشا عبد","رشاء أحمد","زياد هاشم","سهام محمد"];
    const sales = ["٠","١٠","١٥","١٨","٢٠","٢٣","٣٠","٣٥","٣٦"];
    const devices = ["بوتاجاز","تليفزيون","تليفون","ثلاجة","سخان","شاشة","غسالة","لاب توب"];
    document.getElementById("slicers").innerHTML =
        slicer("left-[995px] top-[16px] w-[123px] h-[100px]", "الفرع", ["mnofia","الأسكندرية","الجيزة","القاهرة"].map((t, i) => item(t, i === 1)).join(""), "", true) +
        slicer("left-[995px] top-[119px] w-[123px] h-[179px]", "نوع الجهاز", devices.map(t => item(t, true)).join(""), "", false) +
        slicer("left-[1125px] top-[10px] w-[121px] h-[169px]", "اسم الموظف", emp.map(t => item(t, true)).join(""), scroll("h-[43px]"), false) +
        slicer("left-[1126px] top-[192px] w-[120px] h-[168px]", "مبيعات", sales.map(t => item(t, true)).join(""), scroll("h-[19px]"), false);
</script>
</body>

</html>
